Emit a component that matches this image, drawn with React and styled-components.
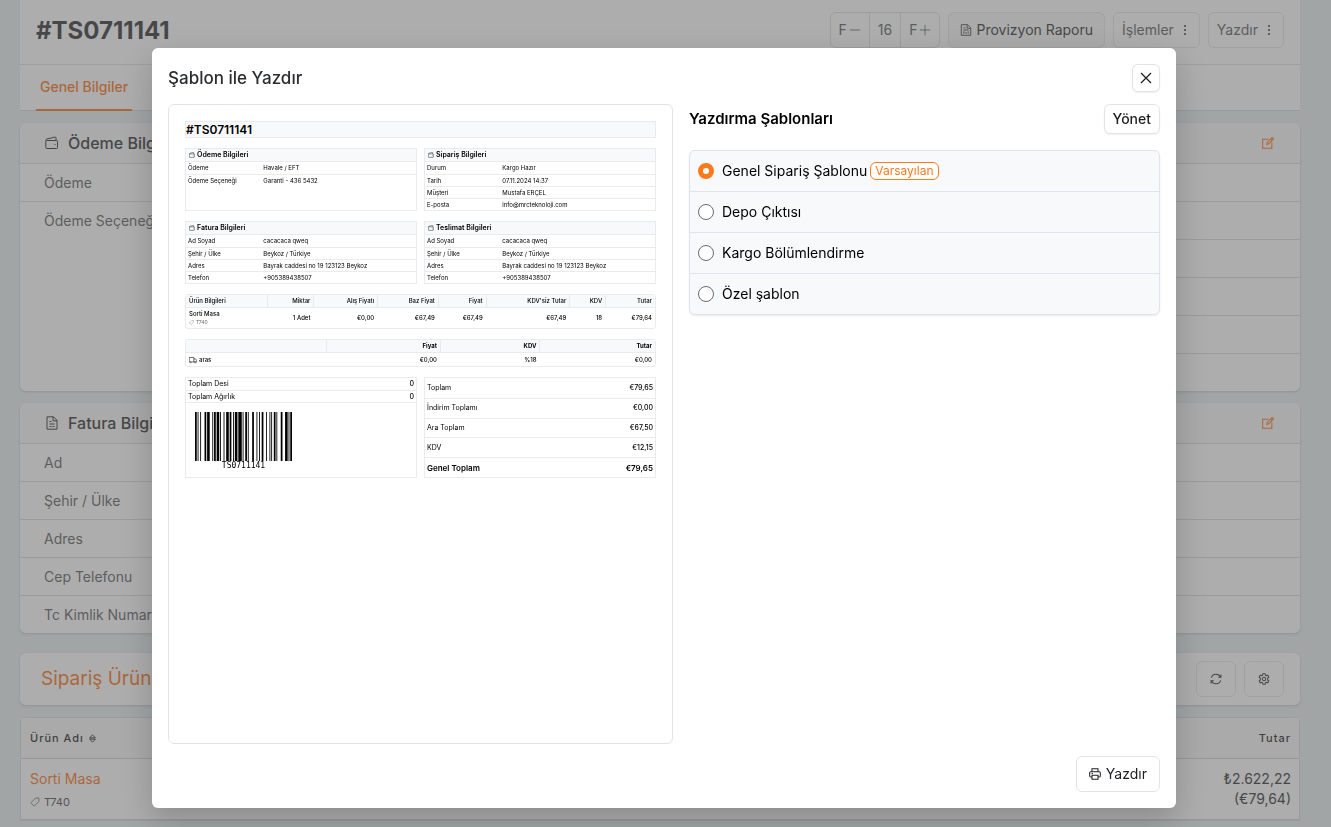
import React from "react";
import styled, { createGlobalStyle } from "styled-components";

const GlobalStyle = createGlobalStyle`
  *, *::before, *::after { box-sizing: border-box; }
  body {
    margin: 0;
    background: #e8eff1;
    color: #000;
    font-family: Inter, "Liberation Sans", sans-serif;
    font-size: 14px;
    line-height: 20px;
  }
  button { font: inherit; cursor: pointer; }
  h1, h2, h3, dl, dd, ul { margin: 0; padding: 0; }
  ul { list-style: none; }
  svg { flex: none; display: block; }
`;

/* ---------- icons ---------- */

const Icon = ({ size = 14, width = 1, children }) => (
  <svg width={size} height={size} viewBox="0 0 14 14" fill="none" stroke="currentColor" strokeWidth={width} aria-hidden="true">
    {children}
  </svg>
);

const WalletIcon = (p) => (
  <Icon {...p}>
    <path d="M1.500 4.500h10.200a.8.8 0 0 1 .8.8v6.400a.8.8 0 0 1-.8.8H1.800a1 1 0 0 1-1-1V4.500c0-.8.4-1.200 1.200-1.500l7.800-1.900c.7-.2 1.200.2 1.200.8v2.600" />
    <path d="M9.500 8.500h1" />
  </Icon>
);
const FileIcon = (p) => (
  <Icon {...p}>
    <path d="M2 .8h6.500l3.500 3.500v8.900h-10zM8 .8v4h4M4.500 5.500H6.500M4.500 8h5M4.500 10.500h2M7.500 10.500h2" />
  </Icon>
);
const ReportIcon = (p) => (
  <Icon {...p}>
    <path d="M1.500.8h7.300l3.700 3.700v8.700h-11zM8.300.8v4.200h4.200M4 4.500h2.500M4 7h6M4.500 8.500V11.500M7 9.500v2M9.500 8.500v3" />
  </Icon>
);
const EditIcon = (p) => (
  <Icon {...p}>
    <path d="M7.500 2.500h-6.700v10.700h10.700v-6.700" />
    <path d="M5.500 8.600l.5-2.200L11.400 1a.8.8 0 0 1 1.100 0l.6.6a.8.8 0 0 1 0 1.100L7.700 8.100zM10.300 2.100l1.700 1.700" />
  </Icon>
);
const RefreshIcon = (p) => (
  <Icon {...p}>
    <path d="M1.500 5.500A5.800 5.800 0 0 1 12.300 4.800M12.800 1.800v3.200H9.600M12.500 8.500A5.800 5.800 0 0 1 1.700 9.200M1.200 12.200v-3.200h3.200" />
  </Icon>
);
const GearIcon = (p) => (
  <Icon {...p}>
    <path d="M5.800.8h2.400l.4 1.700 1.100.6 1.700-.5 1.200 2.100-1.300 1.200v2.200l1.300 1.200-1.200 2.100-1.700-.5-1.100.6-.4 1.700H5.800l-.4-1.700-1.100-.6-1.700.5-1.200-2.100 1.300-1.200V5.900L1.400 4.700l1.200-2.100 1.700.5 1.100-.6z" />
    <circle cx="7" cy="7" r="2" />
  </Icon>
);
const TagIcon = (p) => (
  <Icon {...p}>
    <path d="M7.800 1.500h4.700v4.700L6.300 12.300a.8.8 0 0 1-1.100 0L1.700 8.800a.8.8 0 0 1 0-1.100z" />
  </Icon>
);
const PrintIcon = (p) => (
  <Icon {...p}>
    <path d="M3.500 4.500v-3.500h7v3.500M3.500 10.500H2a1.200 1.200 0 0 1-1.200-1.200V5.700A1.200 1.200 0 0 1 2 4.500h10a1.200 1.200 0 0 1 1.200 1.200v3.600a1.200 1.200 0 0 1-1.200 1.200h-1.500M3.500 8.500h7v4.700h-7zM3 6.500h1.500" />
  </Icon>
);
const TruckIcon = (p) => (
  <Icon {...p}>
    <path d="M4.500 10.500h4V2.500h-8v8h1M8.500 5h2.800l2.200 2.800v2.700h-1M10 10.500H8.500" />
    <circle cx="3" cy="10.800" r="1.200" />
    <circle cx="11" cy="10.800" r="1.200" />
  </Icon>
);
const CloseIcon = (p) => (
  <Icon {...p}>
    <path d="M2 2l10 10M12 2L2 12" />
  </Icon>
);
const MoreIcon = () => (
  <svg width="2" height="10" viewBox="0 0 2 10" fill="currentColor" aria-hidden="true">
    <path d="M0 0h2v2H0zM0 4h2v2H0zM0 8h2v2H0z" />
  </svg>
);
const SortIcon = (p) => (
  <Icon {...p}>
    <path d="M2.500 6L7 1.500 11.500 6zM2.500 8L7 12.500 11.500 8z" />
  </Icon>
);
const MinusIcon = () => <Icon size={12}><path d="M1 7h12" /></Icon>;
const PlusIcon = () => <Icon size={12}><path d="M1 7h12M7 1v12" /></Icon>;

/* ---------- page behind the dialog ---------- */

const Page = styled.div`
  height: 100vh;
  overflow: hidden;
  padding: 0 31px 0 20px;
`;
const Header = styled.header`
  display: flex;
  align-items: flex-start;
  justify-content: space-between;
  height: 65px;
  padding: 12px 16px 0;
  background: #fff;
  border-bottom: 1px solid #dfe3e8;
`;
const OrderTitle = styled.h1`
  font-size: 24px;
  line-height: 38px;
  font-weight: 700;
  color: #303235;
`;
const Toolbar = styled.div`
  display: flex;
  gap: 8px;
`;
const ButtonGroup = styled.div`
  display: flex;
  border: 1px solid #d9e0e0;
  border-radius: 6px;
  color: #5c5f61;
`;
const GroupButton = styled.button`
  display: flex;
  align-items: center;
  gap: 2px;
  height: 34px;
  padding: 0 8px;
  border: 0;
  background: none;
  color: inherit;
  & + & { border-left: 1px solid #d9e0e0; }
`;
const ToolButton = styled.button`
  display: flex;
  align-items: center;
  justify-content: center;
  gap: ${(p) => (p.$menu ? "10px" : "4px")};
  height: 36px;
  min-width: 40px;
  padding: ${(p) => (p.$menu ? "0 13px 0 8px" : "0 11px")};
  border: 1px solid #e2e8e8;
  border-radius: 6px;
  background: ${(p) => (p.$filled ? "#f9f9f9" : "#fff")};
  color: ${(p) => (p.$menu ? "#5c5f61" : "#303235")};
`;
const Tabs = styled.nav`
  display: flex;
  height: 46px;
  padding: 0 16px;
  background: #fff;
  border-bottom: 1px solid #d4dbe0;
`;
const Tab = styled.a`
  display: flex;
  align-items: center;
  height: 46px;
  padding: 0 4px;
  border-bottom: 2px solid #fa7316;
  color: #fa7316;
  font-weight: 500;
  text-decoration: none;
`;
const CardGrid = styled.div`
  display: grid;
  grid-template-columns: 1fr 1fr;
  gap: 12px;
  padding-top: 12px;
`;
const Card = styled.section`
  min-height: ${(p) => (p.$tall ? "268px" : "0")};
  border-radius: 6px;
  background: #fff;
  box-shadow: 0 1px 3px rgba(0, 0, 0, 0.16);
  overflow: hidden;
`;
const CardHead = styled.div`
  display: flex;
  align-items: center;
  justify-content: space-between;
  height: 41px;
  padding: 0 26px 0 25px;
  background: #f8f8f8;
  border-bottom: 1px solid #dadbdd;
`;
const CardTitle = styled.h2`
  display: flex;
  align-items: center;
  gap: 9px;
  font-size: 16px;
  line-height: 24px;
  font-weight: 500;
  color: #303235;
`;
const IconButton = styled.button`
  display: flex;
  padding: 0;
  border: 0;
  background: none;
  color: #fa7316;
`;
const FieldRow = styled.li`
  display: flex;
  align-items: center;
  height: 38px;
  padding: 0 24px;
  border-bottom: 1px solid #dadbdd;
  color: #5c5f61;
  &:last-child {
    height: 37px;
    border-bottom: 0;
  }
`;
const SectionBar = styled.section`
  display: flex;
  align-items: center;
  justify-content: space-between;
  height: 52px;
  margin: 20px 0 12px;
  padding: 0 16px 0 21px;
  border-radius: 6px;
  background: #fff;
  box-shadow: 0 1px 3px rgba(0, 0, 0, 0.16);
`;
const SectionTitle = styled.h2`
  font-size: 19px;
  line-height: 28px;
  font-weight: 400;
  color: #fa7316;
`;
const ProductTable = styled.table`
  width: 100%;
  border: 1px solid #d6dcde;
  border-radius: 6px 6px 0 0;
  border-spacing: 0;
  background: #fff;
  th {
    height: 41px;
    padding: 0 8px;
    background: #f8f8f8;
    border-bottom: 1px solid #d0d3d6;
    font-size: 11px;
    font-weight: 500;
    letter-spacing: 1px;
    text-align: left;
    color: #1e1f22;
  }
  td {
    height: 61px;
    padding: 8px;
    border-bottom: 1px solid #d0d3d6;
    color: #303235;
  }
  tr > :first-child { padding-left: 9px; }
  tr > :last-child { text-align: right; }
`;
const SortLabel = styled.span`
  display: flex;
  align-items: center;
  gap: 4px;
`;
const ProductLink = styled.a`
  color: #fa7316;
  text-decoration: none;
`;
const ProductCode = styled.div`
  display: flex;
  align-items: center;
  gap: 4px;
  padding-top: 5px;
  font-size: 11px;
  line-height: 16px;
  color: #4b4e57;
`;

/* ---------- dialog ---------- */

const Overlay = styled.div`
  position: fixed;
  inset: 0;
  display: flex;
  align-items: flex-start;
  justify-content: center;
  padding: 48px 3px 16px 0;
  background: rgba(92, 92, 92, 0.5);
  overflow: auto;
`;
const Dialog = styled.div`
  display: flex;
  flex-direction: column;
  gap: 12px;
  width: 100%;
  max-width: 1024px;
  padding: 16px;
  border-radius: 6px;
  background: #fff;
  box-shadow: 0 12px 32px rgba(0, 0, 0, 0.2);
`;
const DialogHead = styled.div`
  display: flex;
  align-items: center;
  justify-content: space-between;
`;
const DialogTitle = styled.h2`
  font-size: 17px;
  line-height: 28px;
  font-weight: 500;
  color: #2a2c2f;
`;
const DialogBody = styled.div`
  display: grid;
  grid-template-columns: minmax(0, 505px) minmax(0, 1fr);
  gap: 16px;
`;
const DialogFoot = styled.div`
  display: flex;
  justify-content: flex-end;
`;
const DialogButton = styled.button`
  display: flex;
  align-items: center;
  justify-content: center;
  gap: 5px;
  height: ${(p) => p.$height}px;
  min-width: 28px;
  padding: 0 ${(p) => p.$pad}px;
  border: 1px solid #e1e3ea;
  border-radius: 6px;
  background: #fff;
  color: #1e1f22;
  font-weight: ${(p) => (p.$strong ? 500 : 400)};
  box-shadow: ${(p) => (p.$flat ? "none" : "0 1px 2px rgba(0, 0, 0, 0.06)")};
`;
const ListHead = styled.div`
  display: flex;
  align-items: center;
  justify-content: space-between;
  margin-bottom: 16px;
`;
const ListTitle = styled.h3`
  font-size: 15px;
  line-height: 24px;
  font-weight: 600;
`;
const OptionList = styled.ul`
  border: 1px solid #e1e3ea;
  border-radius: 6px;
  background: #f8f9fb;
  box-shadow: 0 1px 2px rgba(0, 0, 0, 0.08);
`;
const OptionRow = styled.li`
  & + & { border-top: 1px solid #e1e3ea; }
`;
const OptionLabel = styled.label`
  display: flex;
  align-items: center;
  height: 40px;
  padding: 0 8px;
  cursor: pointer;
`;
const Radio = styled.input`
  appearance: none;
  width: 16px;
  height: 16px;
  margin: 0 8px 0 0;
  border: 1px solid #6b6b6b;
  border-radius: 50%;
  background: #fff;
  &:checked { border: 5px solid #fb7a1e; }
`;
const Badge = styled.span`
  margin-left: 3px;
  padding: 0 4px;
  border: 1px solid #fb7a1e;
  border-radius: 6px;
  background: #fff;
  color: #fb7a1e;
  font-size: 12px;
  line-height: 16px;
`;

/* ---------- printed sheet preview ---------- */

const Sheet = styled.article`
  display: flex;
  flex-direction: column;
  gap: 10px;
  height: 640px;
  padding: 16px;
  border: 1px solid #e1e3ea;
  border-radius: 6px;
  font-size: 6px;
  line-height: 10px;
`;
const SheetTitle = styled.h3`
  height: 17px;
  border: 1px solid #e9ebef;
  background: #f8f9fb;
  font-size: 12px;
  line-height: 16px;
  font-weight: 600;
`;
const SheetPair = styled.div`
  display: grid;
  grid-template-columns: 1fr 1fr;
  gap: 7px;
`;
const InfoBox = styled.section`
  height: 63px;
  border: 1px solid #e9ebef;
`;
const InfoTitle = styled.h4`
  display: flex;
  align-items: center;
  gap: 2px;
  height: 13px;
  margin: 0;
  padding: 0 3px;
  background: #f8f9fb;
  border-bottom: 1px solid #e9ebef;
  font-size: 7px;
  font-weight: 600;
`;
const InfoList = styled.dl`
  display: grid;
  grid-template-rows: repeat(4, 1fr);
  height: 48px;
`;
const InfoRow = styled.div`
  display: grid;
  grid-template-columns: 1fr 2fr;
  align-items: center;
  padding: 0 2px;
  & + & { border-top: 1px solid #e9ebef; }
`;
const SheetTable = styled.table`
  width: 100%;
  table-layout: fixed;
  border: 1px solid #e9ebef;
  border-radius: 3px;
  border-spacing: 0;
  th, td {
    padding: 0 3px;
    text-align: right;
    line-height: 8px;
  }
  th:first-child, td:first-child { text-align: left; }
  th {
    height: 13px;
    background: #f8f9fb;
    border-bottom: 1px solid #e9ebef;
    font-weight: ${(p) => (p.$strong ? 700 : 500)};
  }
  td { height: ${(p) => p.$row}px; font-weight: 500; }
  th + th { border-left: 1px solid #e9ebef; }
`;
const Inline = styled.span`
  display: flex;
  align-items: center;
  gap: 2px;
  color: ${(p) => (p.$muted ? "#666" : "inherit")};
  font-size: ${(p) => (p.$muted ? "5px" : "inherit")};
  font-weight: ${(p) => (p.$muted ? 400 : "inherit")};
`;
const TotalsBox = styled.div`
  height: 101px;
  border: 1px solid #e9ebef;
`;
const TotalsList = styled.dl`
  display: grid;
  grid-auto-rows: 1fr;
  height: ${(p) => p.$height}px;
  border-bottom: ${(p) => (p.$ruled ? "1px solid #e9ebef" : "0")};
`;
const TotalRow = styled.div`
  display: flex;
  align-items: center;
  justify-content: space-between;
  padding: 0 2px;
  font-size: ${(p) => (p.$grand ? 8 : 7)}px;
  font-weight: ${(p) => (p.$grand ? 600 : 400)};
  & + & { border-top: 1px solid #e9ebef; }
  dd { font-weight: ${(p) => (p.$grand ? 600 : 500)}; }
`;
const BarcodeFigure = styled.figure`
  width: 97px;
  margin: 9px;
  text-align: center;
`;
const BarcodeText = styled.figcaption`
  font-family: "DejaVu Sans Mono", monospace;
  font-size: 8px;
  line-height: 10px;
`;

/* Code 128 module widths: bar, space, bar, ... from start to stop */
const CODE128 = "211214" + "213311" + "213113" + "123122" + "113141" + "122114" + "231212" + "231311" + "122114" + "2331112";

function Barcode({ value }) {
  let x = 0;
  const bars = [];
  [...CODE128].forEach((c, i) => {
    const w = Number(c);
    if (i % 2 === 0) bars.push(<rect key={i} x={x} width={w} height="49" />);
    x += w;
  });
  return (
    <BarcodeFigure>
      <svg width="97" height="49" viewBox={`0 0 ${x} 49`} preserveAspectRatio="none" aria-hidden="true">{bars}</svg>
      <BarcodeText>{value}</BarcodeText>
    </BarcodeFigure>
  );
}

function Info({ title, rows }) {
  return (
    <InfoBox>
      <InfoTitle><WalletIcon size={6} />{title}</InfoTitle>
      <InfoList>
        {rows.map(([k, v]) => (
          <InfoRow key={k}><dt>{k}</dt><dd>{v}</dd></InfoRow>
        ))}
      </InfoList>
    </InfoBox>
  );
}

const ADDRESS = [
  ["Ad Soyad", "cacacaca qweq"],
  ["Şehir / Ülke", "Beykoz / Türkiye"],
  ["Adres", "Bayrak caddesi no 19 123123 Beykoz"],
  ["Telefon", "+905389438507"],
];
const PRODUCT_COLUMNS = [
  ["Ürün Bilgileri", 81], ["Miktar", 47], ["Alış Fiyatı", 64], ["Baz Fiyat", 61],
  ["Fiyat", 48], ["KDV'siz Tutar", 84], ["KDV", 36], ["Tutar", 50],
];
const PRODUCT_VALUES = ["1 Adet", "€0,00", "€67,49", "€67,49", "€67,49", "18", "€79,64"];
const CARGO_COLUMNS = [["", 141], ["Fiyat", 114], ["KDV", 100], ["Tutar", 116]];
const TOTALS = [
  ["Toplam", "€79,65"], ["İndirim Toplamı", "€0,00"], ["Ara Toplam", "€67,50"],
  ["KDV", "€12,15"], ["Genel Toplam", "€79,65"],
];

function TableHead({ columns }) {
  return (
    <>
      <colgroup>
        {columns.map(([name, w]) => <col key={name} style={{ width: `${(w / 471) * 100}%` }} />)}
      </colgroup>
      <thead><tr>{columns.map(([name]) => <th key={name}>{name}</th>)}</tr></thead>
    </>
  );
}

function Preview() {
  return (
    <Sheet>
      <SheetTitle>#TS0711141</SheetTitle>
      <SheetPair>
        <Info title="Ödeme Bilgileri" rows={[["Ödeme", "Havale / EFT"], ["Ödeme Seçeneği", "Garanti - 436 5432"]]} />
        <Info title="Sipariş Bilgileri" rows={[["Durum", "Kargo Hazır"], ["Tarih", "07.11.2024 14:37"], ["Müşteri", "Mustafa ERÇEL"], ["E-posta", "info@mrcteknoloji.com"]]} />
      </SheetPair>
      <SheetPair>
        <Info title="Fatura Bilgileri" rows={ADDRESS} />
        <Info title="Teslimat Bilgileri" rows={ADDRESS} />
      </SheetPair>
      <SheetTable $row={20}>
        <TableHead columns={PRODUCT_COLUMNS} />
        <tbody>
          <tr>
            <td>Sorti Masa<Inline $muted><TagIcon size={5} />T740</Inline></td>
            {PRODUCT_VALUES.map((v, i) => <td key={i}>{v}</td>)}
          </tr>
        </tbody>
      </SheetTable>
      <SheetTable $row={13} $strong>
        <TableHead columns={CARGO_COLUMNS} />
        <tbody>
          <tr>
            <td><Inline><TruckIcon size={8} />aras</Inline></td>
            <td>€0,00</td><td>%18</td><td>€0,00</td>
          </tr>
        </tbody>
      </SheetTable>
      <SheetPair>
        <TotalsBox>
          <TotalsList $height={25} $ruled>
            <TotalRow><dt>Toplam Desi</dt><dd>0</dd></TotalRow>
            <TotalRow><dt>Toplam Ağırlık</dt><dd>0</dd></TotalRow>
          </TotalsList>
          <Barcode value="TS0711141" />
        </TotalsBox>
        <TotalsBox>
          <TotalsList $height={99}>
            {TOTALS.map(([k, v], i) => (
              <TotalRow key={k} $grand={i === TOTALS.length - 1}><dt>{k}</dt><dd>{v}</dd></TotalRow>
            ))}
          </TotalsList>
        </TotalsBox>
      </SheetPair>
    </Sheet>
  );
}

function DetailCard({ icon, title, rows, tall }) {
  return (
    <Card $tall={tall}>
      <CardHead>
        <CardTitle>{icon}{title}</CardTitle>
        <IconButton aria-label="Düzenle"><EditIcon size={12} width={1.2} /></IconButton>
      </CardHead>
      <ul>{rows.map((r, i) => <FieldRow key={i}>{r}</FieldRow>)}</ul>
    </Card>
  );
}

const TEMPLATES = ["Genel Sipariş Şablonu", "Depo Çıktısı", "Kargo Bölümlendirme", "Özel şablon"];

export default function App() {
  return (
    <>
      <GlobalStyle />
      <Page>
        <Header>
          <OrderTitle>#TS0711141</OrderTitle>
          <Toolbar>
            <ButtonGroup>
              <GroupButton>F<MinusIcon /></GroupButton>
              <GroupButton>16</GroupButton>
              <GroupButton>F<PlusIcon /></GroupButton>
            </ButtonGroup>
            <ToolButton $filled><ReportIcon size={12} />Provizyon Raporu</ToolButton>
            <ToolButton $menu>İşlemler<MoreIcon /></ToolButton>
            <ToolButton $menu>Yazdır<MoreIcon /></ToolButton>
          </Toolbar>
        </Header>
        <Tabs><Tab href="#genel">Genel Bilgiler</Tab></Tabs>
        <CardGrid>
          <DetailCard tall icon={<WalletIcon />} title="Ödeme Bilgileri" rows={["Ödeme", "Ödeme Seçeneği"]} />
          <DetailCard tall rows={["", "", "", "", "", ""]} />
          <DetailCard icon={<FileIcon />} title="Fatura Bilgileri" rows={["Ad", "Şehir / Ülke", "Adres", "Cep Telefonu", "Tc Kimlik Numarası"]} />
          <DetailCard rows={["", "", "", "", ""]} />
        </CardGrid>
        <SectionBar>
          <SectionTitle>Sipariş Ürünleri</SectionTitle>
          <Toolbar>
            <ToolButton aria-label="Yenile"><RefreshIcon size={12} width={1.2} /></ToolButton>
            <ToolButton aria-label="Ayarlar"><GearIcon size={12} width={1.2} /></ToolButton>
          </Toolbar>
        </SectionBar>
        <ProductTable>
          <thead>
            <tr><th><SortLabel>Ürün Adı<SortIcon size={9} width={1.4} /></SortLabel></th><th>Tutar</th></tr>
          </thead>
          <tbody>
            <tr>
              <td>
                <ProductLink href="#urun">Sorti Masa</ProductLink>
                <ProductCode><TagIcon size={10} />T740</ProductCode>
              </td>
              <td>₺2.622,22<br />(€79,64)</td>
            </tr>
          </tbody>
        </ProductTable>
      </Page>
      <Overlay>
        <Dialog role="dialog" aria-modal="true" aria-labelledby="dialog-title">
          <DialogHead>
            <DialogTitle id="dialog-title">Şablon ile Yazdır</DialogTitle>
            <DialogButton $height={28} $pad={0} aria-label="Kapat"><CloseIcon width={1.3} /></DialogButton>
          </DialogHead>
          <DialogBody>
            <Preview />
            <div>
              <ListHead>
                <ListTitle>Yazdırma Şablonları</ListTitle>
                <DialogButton $height={30} $pad={8} $strong>Yönet</DialogButton>
              </ListHead>
              <OptionList>
                {TEMPLATES.map((name, i) => (
                  <OptionRow key={name}>
                    <OptionLabel>
                      <Radio type="radio" name="template" defaultChecked={i === 0} />
                      {name}
                      {i === 0 && <Badge>Varsayılan</Badge>}
                    </OptionLabel>
                  </OptionRow>
                ))}
              </OptionList>
            </div>
          </DialogBody>
          <DialogFoot>
            <DialogButton $height={36} $pad={12} $flat><PrintIcon size={12} width={1.2} />Yazdır</DialogButton>
          </DialogFoot>
        </Dialog>
      </Overlay>
    </>
  );
}
